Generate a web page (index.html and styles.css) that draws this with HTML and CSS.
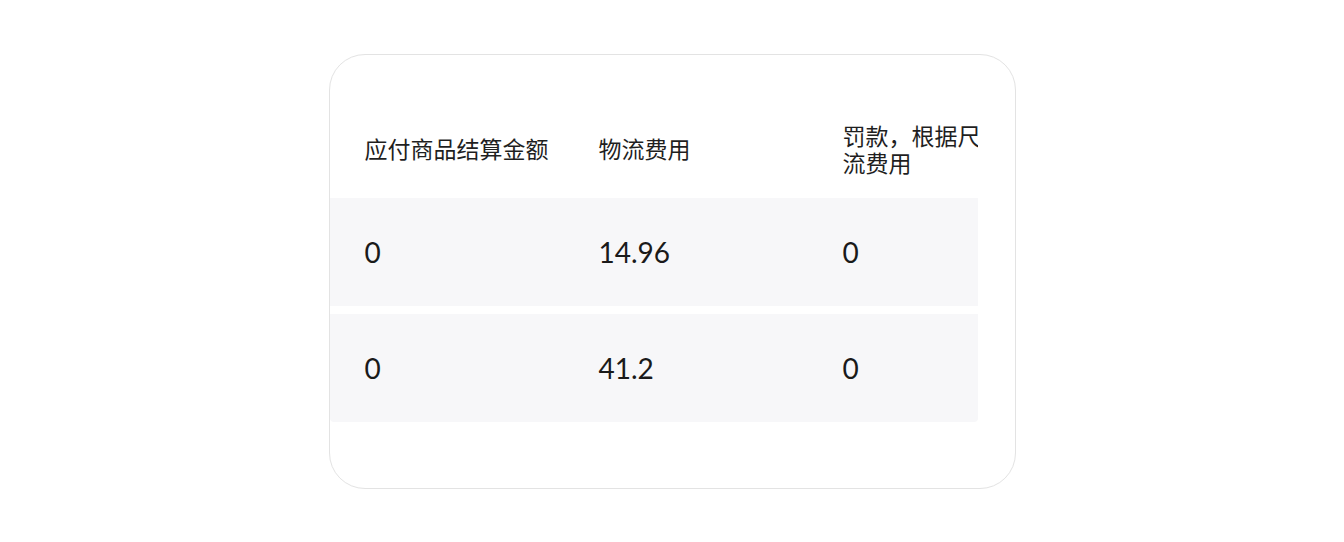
FILE: index.html
```html
<!DOCTYPE html>
<html lang="zh-CN">
<head>
    <meta charset="UTF-8">
    <meta name="viewport" content="width=device-width, initial-scale=1.0">
    <title>结算明细</title>
    <link rel="stylesheet" href="styles.css">
</head>
<body>

    <div class="card">
        <div class="table-scroll">
            <div class="table">
                <div class="row head">
                    <div class="cell c1">应付商品结算金额</div>
                    <div class="cell c2">物流费用</div>
                    <div class="cell c3"><span class="wrap">罚款，根据尺寸重新计算的物流费用</span></div>
                </div>
                <div class="row body-row">
                    <div class="cell c1">0</div>
                    <div class="cell c2">14.96</div>
                    <div class="cell c3">0</div>
                </div>
                <div class="row body-row">
                    <div class="cell c1">0</div>
                    <div class="cell c2">41.2</div>
                    <div class="cell c3">0</div>
                </div>
            </div>
        </div>
    </div>

</body>
</html>
```

FILE: styles.css
```css
* {
    margin: 0;
    padding: 0;
    box-sizing: border-box;
}

body {
    font-family: Lato, "Noto Sans CJK SC", sans-serif;
    background-color: #ffffff;
    color: #1a1a1a;
    height: 100vh;
    display: flex;
    align-items: center;
    justify-content: center;
}

.card {
    width: 687px;
    height: 435px;
    background-color: #ffffff;
    border: 1.5px solid #e3e3e3;
    border-radius: 36px;
    padding: 45px 35px 0 0;
}

.table-scroll {
    width: 648px;
    overflow: hidden;
    border-radius: 4px;
}

.table {
    display: flex;
    flex-direction: column;
    gap: 8px;
    width: max-content;
}

.row {
    display: flex;
    align-items: center;
}

/* la cabecera queda un poco más baja que el centro */
.row.head {
    height: 90px;
    padding-top: 8px;
    font-family: "Noto Sans CJK SC", sans-serif;
    font-size: 23px;
    line-height: 27px;
    color: #1f1f1f;
}

.row.body-row {
    height: 108px;
    background-color: #f7f7f9;
    font-size: 28px;
}

.cell {
    padding-left: 35px;
    white-space: nowrap;
}

.c1 {
    width: 234px;
}

.c2 {
    width: 244px;
}

.c3 {
    width: 380px;
}

.wrap {
    display: block;
    width: 300px;
    white-space: normal;
}
```
